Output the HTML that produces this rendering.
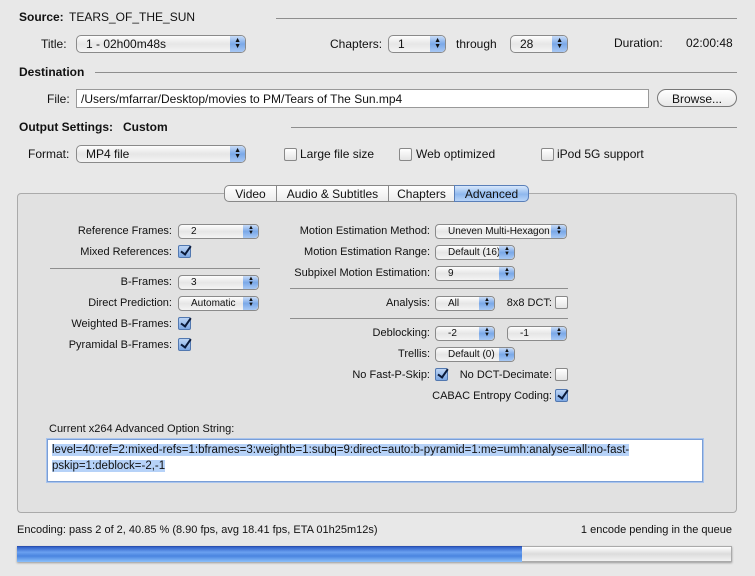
<!DOCTYPE html>
<html><head><style>
*{box-sizing:border-box;margin:0;padding:0}
body{width:755px;height:576px;background:#e8e8e8;font-family:"Liberation Sans",sans-serif;font-size:12px;color:#111;position:relative;overflow:hidden}
.a{position:absolute;white-space:nowrap}
.b{font-weight:bold}
.ln{position:absolute;height:1px;background:#8e8e8e}
.pop{position:absolute;height:18px;border:1px solid #8a8a8a;border-radius:5px;background:linear-gradient(#fdfdfd,#e6e6e6 50%,#f4f4f4);font-size:12px;padding:1px 0 0 9px;white-space:nowrap}
.pop:after{content:"";position:absolute;right:0;top:0;bottom:0;width:15px;border-radius:0 4px 4px 0;background:linear-gradient(#c8dcf8,#7aa8e8 50%,#a8c8f4)}
.pop i{position:absolute;right:4px;top:2px;font-style:normal;font-size:7px;line-height:6px;z-index:2;color:#111}
.sp{height:15px;font-size:10px;padding:1px 0 0 12px;border-radius:4px}
.sp i{top:1px;font-size:6px;line-height:5px}
.cb{position:absolute;width:13px;height:13px;border:1px solid #888;border-radius:2px;background:linear-gradient(#fff,#e4e4e4)}
.ck{background:linear-gradient(#bcd4f4,#7da8e4);border-color:#5278b0}
.ck:after{content:"";position:absolute;left:4px;top:-2px;width:4px;height:9px;border:solid #0a1a3a;border-width:0 2px 2px 0;transform:rotate(35deg)}
.r{text-align:right}
.tab{position:absolute;top:185px;height:17px;border:1px solid #888;background:linear-gradient(#fff,#ececec);font-size:12px;text-align:center;padding-top:1px}
</style></head><body>
<div class="a b" style="left:19px;top:10px">Source:</div>
<div class="a" style="left:69px;top:10px">TEARS_OF_THE_SUN</div>
<div class="ln" style="left:276px;width:461px;top:18px"></div>
<div class="a" style="left:41px;top:37px">Title:</div>
<div class="pop" style="left:76px;top:35px;width:170px">1 - 02h00m48s<i>▲<br>▼</i></div>
<div class="a" style="left:330px;top:37px">Chapters:</div>
<div class="pop" style="left:388px;top:35px;width:58px">1<i>▲<br>▼</i></div>
<div class="a" style="left:456px;top:37px">through</div>
<div class="pop" style="left:510px;top:35px;width:58px">28<i>▲<br>▼</i></div>
<div class="a" style="left:614px;top:36px">Duration:</div>
<div class="a" style="left:686px;top:36px">02:00:48</div>
<div class="a b" style="left:19px;top:65px">Destination</div>
<div class="ln" style="left:95px;width:642px;top:72px"></div>
<div class="a" style="left:47px;top:92px">File:</div>
<div class="a" style="left:76px;top:89px;width:573px;height:19px;background:#fff;border:1px solid #999;padding:2px 4px">/Users/mfarrar/Desktop/movies to PM/Tears of The Sun.mp4</div>
<div class="a" style="left:657px;top:89px;width:80px;height:18px;border:1px solid #777;border-radius:9px;background:linear-gradient(#fff,#e8e8e8);text-align:center;padding-top:2px">Browse...</div>
<div class="a b" style="left:19px;top:120px">Output Settings:</div>
<div class="a b" style="left:123px;top:120px">Custom</div>
<div class="ln" style="left:291px;width:446px;top:127px"></div>
<div class="a" style="left:28px;top:147px">Format:</div>
<div class="pop" style="left:76px;top:145px;width:170px">MP4 file<i>▲<br>▼</i></div>
<div class="cb" style="left:284px;top:148px"></div><div class="a" style="left:300px;top:147px">Large file size</div>
<div class="cb" style="left:399px;top:148px"></div><div class="a" style="left:416px;top:147px">Web optimized</div>
<div class="cb" style="left:541px;top:148px"></div><div class="a" style="left:557px;top:147px">iPod 5G support</div>

<div class="a" style="left:17px;top:193px;width:720px;height:320px;background:#e1e1e1;border:1px solid #aaa;border-radius:4px"></div>
<div class="tab" style="left:224px;width:53px;border-radius:5px 0 0 5px">Video</div>
<div class="tab" style="left:276px;width:113px">Audio &amp; Subtitles</div>
<div class="tab" style="left:388px;width:67px">Chapters</div>
<div class="tab" style="left:454px;width:75px;border-radius:0 5px 5px 0;background:linear-gradient(#d8e8fc,#8fb8ee 55%,#b8d4f8);border-color:#5a7fb8">Advanced</div>

<div style="font-size:11px">
<div class="a r" style="left:40px;width:132px;top:225px">Reference Frames:</div>
<div class="pop sp" style="left:178px;top:224px;width:81px">2<i>▲<br>▼</i></div>
<div class="a r" style="left:40px;width:132px;top:246px">Mixed References:</div>
<div class="cb ck" style="left:178px;top:245px"></div>
<div class="ln" style="left:50px;width:210px;top:268px"></div>
<div class="a r" style="left:40px;width:132px;top:276px">B-Frames:</div>
<div class="pop sp" style="left:178px;top:275px;width:81px">3<i>▲<br>▼</i></div>
<div class="a r" style="left:40px;width:132px;top:297px">Direct Prediction:</div>
<div class="pop sp" style="left:178px;top:296px;width:81px">Automatic<i>▲<br>▼</i></div>
<div class="a r" style="left:40px;width:132px;top:318px">Weighted B-Frames:</div>
<div class="cb ck" style="left:178px;top:317px"></div>
<div class="a r" style="left:40px;width:132px;top:339px">Pyramidal B-Frames:</div>
<div class="cb ck" style="left:178px;top:338px"></div>

<div class="a r" style="left:270px;width:160px;top:225px">Motion Estimation Method:</div>
<div class="pop sp" style="left:435px;top:224px;width:132px">Uneven Multi-Hexagon<i>▲<br>▼</i></div>
<div class="a r" style="left:270px;width:160px;top:246px">Motion Estimation Range:</div>
<div class="pop sp" style="left:435px;top:245px;width:80px">Default (16)<i>▲<br>▼</i></div>
<div class="a r" style="left:270px;width:160px;top:267px">Subpixel Motion Estimation:</div>
<div class="pop sp" style="left:435px;top:266px;width:80px">9<i>▲<br>▼</i></div>
<div class="ln" style="left:290px;width:278px;top:288px"></div>
<div class="a r" style="left:270px;width:160px;top:297px">Analysis:</div>
<div class="pop sp" style="left:435px;top:296px;width:60px">All<i>▲<br>▼</i></div>
<div class="a r" style="left:480px;width:72px;top:297px">8x8 DCT:</div>
<div class="cb" style="left:555px;top:296px"></div>
<div class="ln" style="left:290px;width:278px;top:318px"></div>
<div class="a r" style="left:270px;width:160px;top:327px">Deblocking:</div>
<div class="pop sp" style="left:435px;top:326px;width:60px">-2<i>▲<br>▼</i></div>
<div class="pop sp" style="left:507px;top:326px;width:60px">-1<i>▲<br>▼</i></div>
<div class="a r" style="left:270px;width:160px;top:348px">Trellis:</div>
<div class="pop sp" style="left:435px;top:347px;width:80px">Default (0)<i>▲<br>▼</i></div>
<div class="a r" style="left:270px;width:160px;top:369px">No Fast-P-Skip:</div>
<div class="cb ck" style="left:435px;top:368px"></div>
<div class="a r" style="left:440px;width:112px;top:369px">No DCT-Decimate:</div>
<div class="cb" style="left:555px;top:368px"></div>
<div class="a r" style="left:400px;width:152px;top:390px">CABAC Entropy Coding:</div>
<div class="cb ck" style="left:555px;top:389px"></div>
<div class="a" style="left:49px;top:423px">Current x264 Advanced Option String:</div>
</div>
<div class="a" style="left:47px;top:439px;width:656px;height:43px;background:#fff;border:1px solid #7a9ed6;box-shadow:0 0 0 1px #a8c4ee;padding:2px 4px;font-size:11.5px;line-height:16px;white-space:normal"><span style="background:#b6d2f8">level=40:ref=2:mixed-refs=1:bframes=3:weightb=1:subq=9:direct=auto:b-pyramid=1:me=umh:analyse=all:no-fast-pskip=1:deblock=-2,-1</span></div>

<div class="a" style="left:17px;top:524px;font-size:11px">Encoding: pass 2 of 2, 40.85 % (8.90 fps, avg 18.41 fps, ETA 01h25m12s)</div>
<div class="a r" style="left:500px;width:232px;top:524px;font-size:11px">1 encode pending in the queue</div>
<div class="a" style="left:17px;top:546px;width:715px;height:16px;border:1px solid #aaa;background:linear-gradient(#fff,#dcdcdc 50%,#f2f2f2);box-shadow:0 1px 2px #999"></div>
<div class="a" style="left:17px;top:546px;width:505px;height:16px;background:linear-gradient(#3060c8,#6aa0f0 35%,#4a84e0 60%,#8cc0fa);border-top:1px solid #2a50b0"></div>
</body></html>
